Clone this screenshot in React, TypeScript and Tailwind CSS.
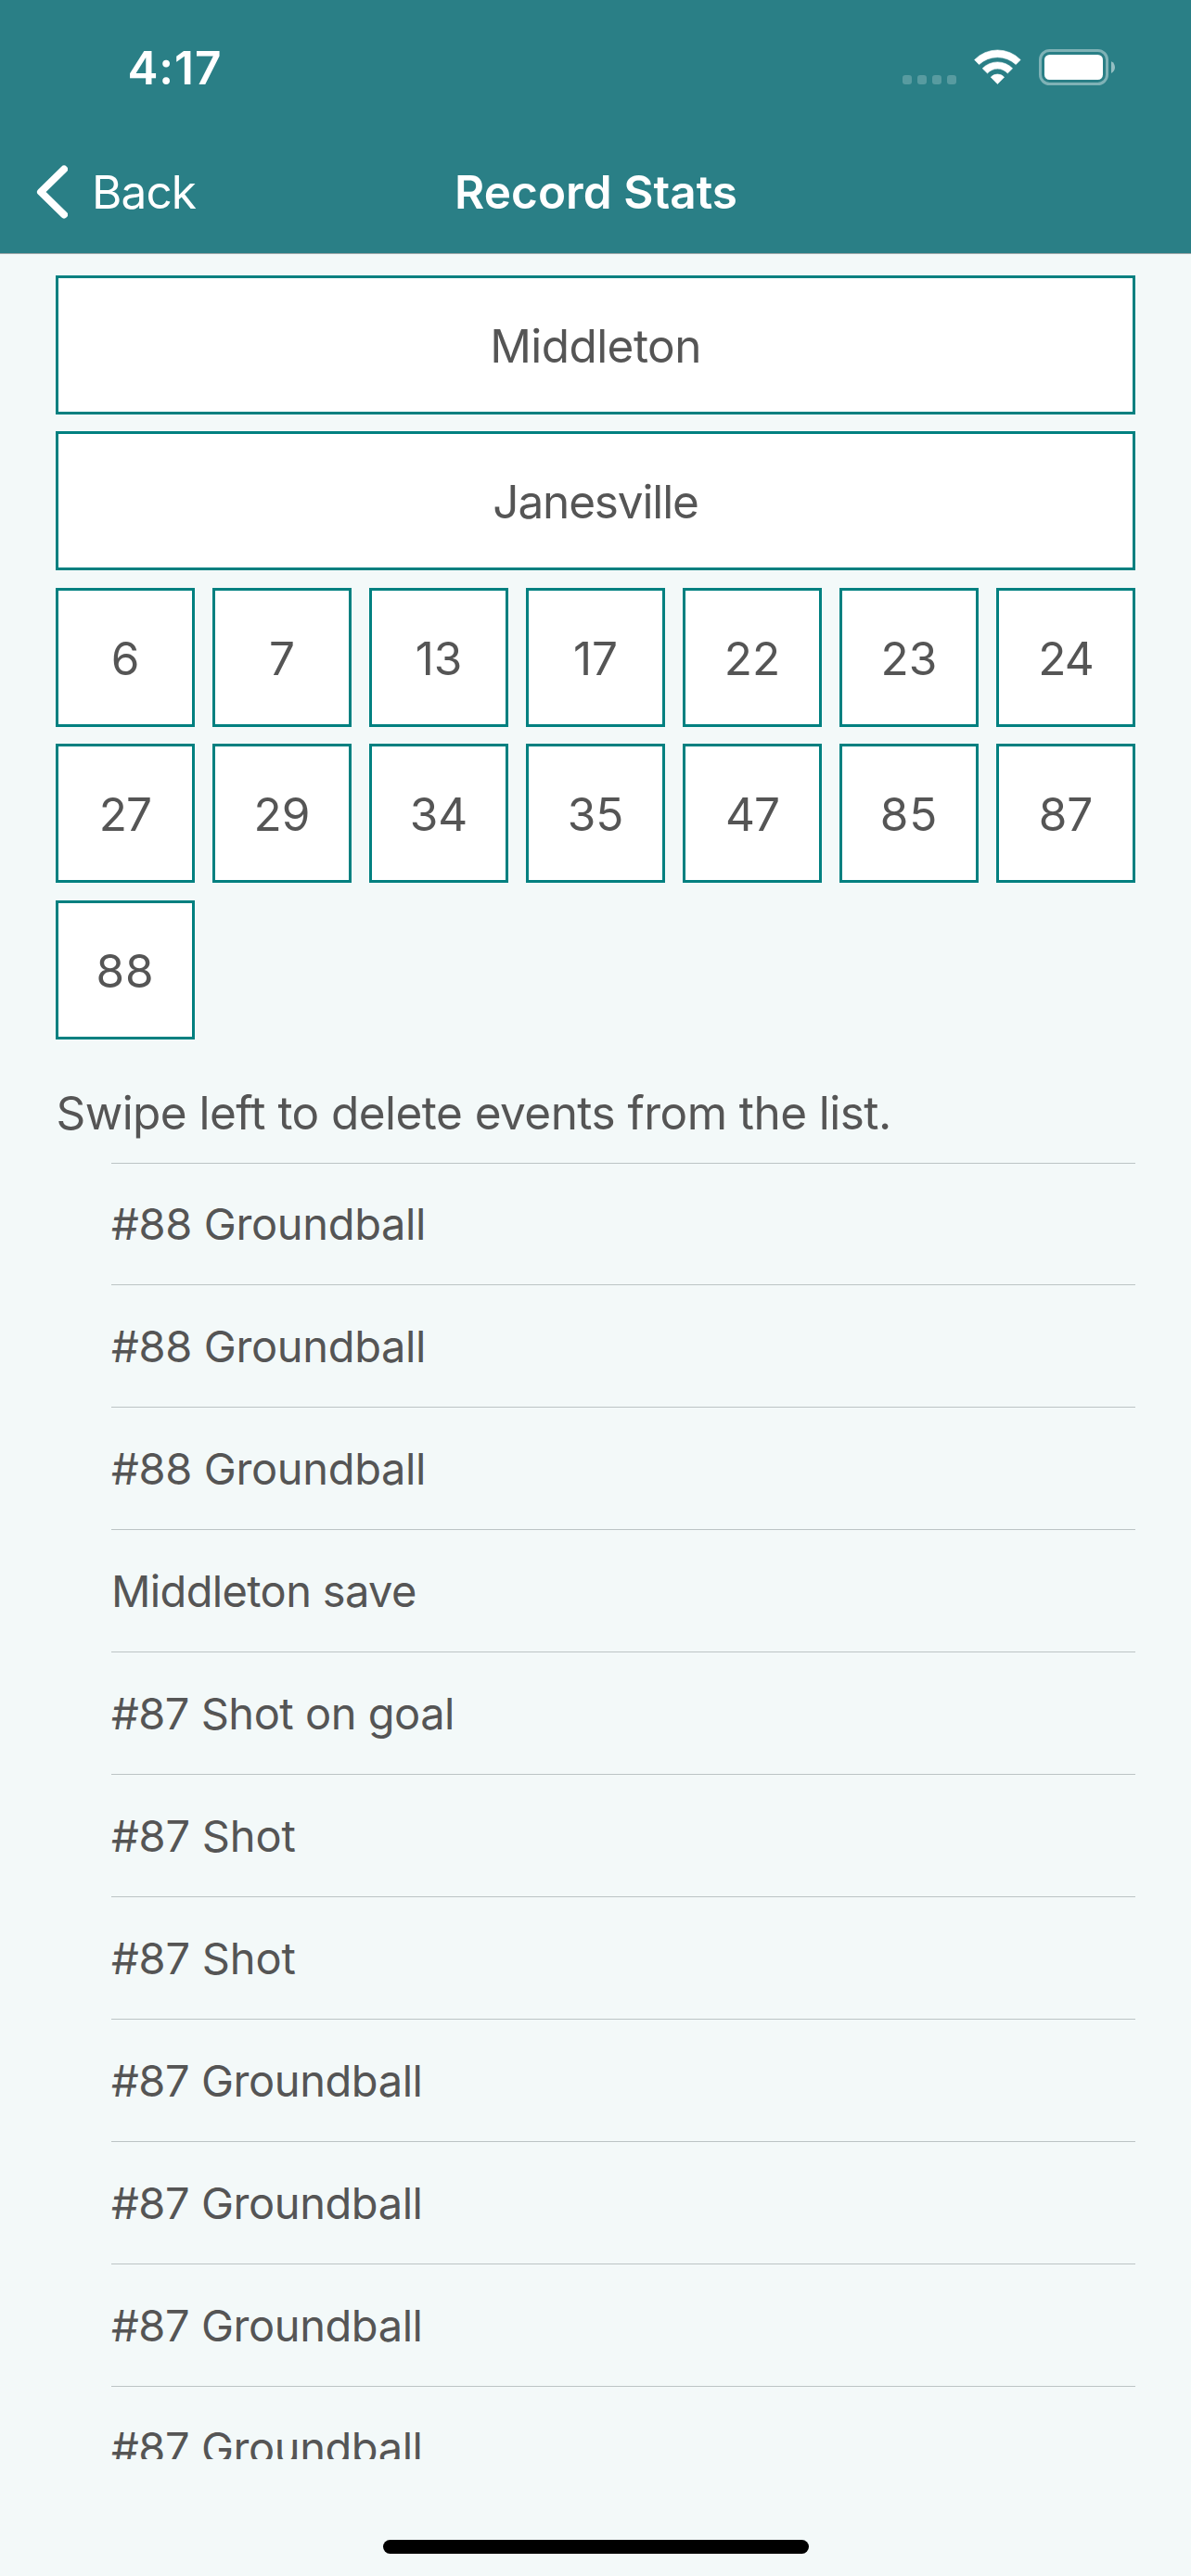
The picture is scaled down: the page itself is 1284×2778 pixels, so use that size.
import React from "react";

const TIGHT = "tracking-[-0.9px]";
const EVEN = "tracking-normal";
const WIDE = "tracking-[0.8px]";

const players: [string, string][] = [
  ["6", EVEN],
  ["7", EVEN],
  ["13", EVEN],
  ["17", EVEN],
  ["22", EVEN],
  ["23", EVEN],
  ["24", TIGHT],
  ["27", TIGHT],
  ["29", EVEN],
  ["34", EVEN],
  ["35", EVEN],
  ["47", TIGHT],
  ["85", WIDE],
  ["87", EVEN],
  ["88", WIDE],
];

const G88 = { text: "#88 Groundball", spacing: "tracking-[-0.35px]" };
const G87 = { text: "#87 Groundball", spacing: "tracking-[-0.43px]" };
const SHOT = { text: "#87 Shot", spacing: "tracking-[-0.2px]" };

const events = [
  G88,
  G88,
  G88,
  { text: "Middleton save", spacing: "tracking-[-0.64px]" },
  { text: "#87 Shot on goal", spacing: "tracking-[-0.49px]" },
  SHOT,
  SHOT,
  G87,
  G87,
  G87,
  G87,
];

function StatusIcons() {
  return (
    <svg width="232" height="40" viewBox="0 0 232 40" fill="white" aria-hidden="true">
      <g fillOpacity="0.22">
        <rect x="3" y="28" width="10" height="10" rx="3" />
        <rect x="19" y="28" width="10" height="10" rx="3" />
        <rect x="35" y="28" width="10" height="10" rx="3" />
        <rect x="51" y="28" width="10" height="10" rx="3" />
      </g>
      <g transform="translate(80 1)" stroke="white" strokeWidth="0.6" strokeLinejoin="round">
        <path d="M0.6 10.5A34.5 34.5 0 0 1 50.2 10.5L45.2 15.6A29 29 0 0 0 5.5 15.6Z" />
        <path d="M9.2 19.8A22.5 22.5 0 0 1 41.6 19.8L36.3 25A14.6 14.6 0 0 0 14.5 25Z" />
        <path d="M18.2 29.2A9.7 9.7 0 0 1 32.6 29.2L25.4 36.6Z" />
      </g>
      <rect x="151.5" y="1.5" width="72" height="36" rx="10" fill="none" stroke="white" strokeOpacity="0.4" strokeWidth="3" />
      <rect x="156" y="6" width="63" height="27" rx="5.5" />
      <path d="M228 13.2C230.6 14.4 232 16.8 232 19.6C232 22.4 230.6 24.8 228 26Z" fillOpacity="0.5" />
    </svg>
  );
}

function TeamButton({ children, className }: { children: React.ReactNode; className: string }) {
  return (
    <button
      className={`col-span-7 flex h-[150px] items-center justify-center border-[3px] border-[#008080] bg-white pt-0.5 ${className}`}
    >
      {children}
    </button>
  );
}

export default function App() {
  return (
    <div className="flex h-[2778px] w-[1284px] flex-col overflow-hidden bg-[#f3f9f9] font-[Inter,sans-serif] text-[49.5px] text-[#555555]">
      <header className="h-[274px] shrink-0 border-b border-[#a0a8aa] bg-[#2a7f86] text-white">
        <div className="flex h-[146px] items-center justify-between pr-[82px] pl-[137.5px]">
          <span className="font-semibold tracking-[0.9px]">4:17</span>
          <StatusIcons />
        </div>
        <div className="grid h-[122px] grid-cols-3 items-center">
          <button className="flex items-center gap-[26px] pl-[39px]">
            <svg width="34" height="58" viewBox="0 0 34 58" fill="none" aria-hidden="true">
              <path d="M30 4.5L5 29L30 53.5" stroke="white" strokeWidth="8" strokeLinecap="round" strokeLinejoin="round" />
            </svg>
            <span className="tracking-[-0.9px]">Back</span>
          </button>
          <h1 className="pl-px text-center font-semibold tracking-[0.05px] whitespace-nowrap">Record Stats</h1>
        </div>
      </header>

      <section className="grid grid-cols-7 gap-x-[19px] gap-y-[18.45px] px-[60px] pt-[23px]">
        <TeamButton className="tracking-[-0.57px]">Middleton</TeamButton>
        <TeamButton className="tracking-[-1.16px]">Janesville</TeamButton>
        {players.map(([n, spacing]) => (
          <button
            key={n}
            className={`flex h-[150px] items-center justify-center border-[3px] border-[#008080] bg-white pt-0.5 ${spacing}`}
          >
            {n}
          </button>
        ))}
      </section>

      <p className="mt-[49px] h-[60px] shrink-0 pl-[60.5px] leading-[60px] tracking-[-0.55px]">
        Swipe left to delete events from the list.
      </p>

      <ul className="mt-[24px] mr-[60px] ml-[120px] h-[1398px] shrink-0 overflow-hidden text-[47px]">
        {events.map((e, i) => (
          <li
            key={i}
            className={`flex h-[132px] items-center border-t border-[#bcc4c5] pt-px first:h-[131px] ${e.spacing}`}
          >
            {e.text}
          </li>
        ))}
      </ul>

      <div className="mt-[87px] ml-[413px] h-[15px] w-[459px] shrink-0 rounded-full bg-black" />
    </div>
  );
}
